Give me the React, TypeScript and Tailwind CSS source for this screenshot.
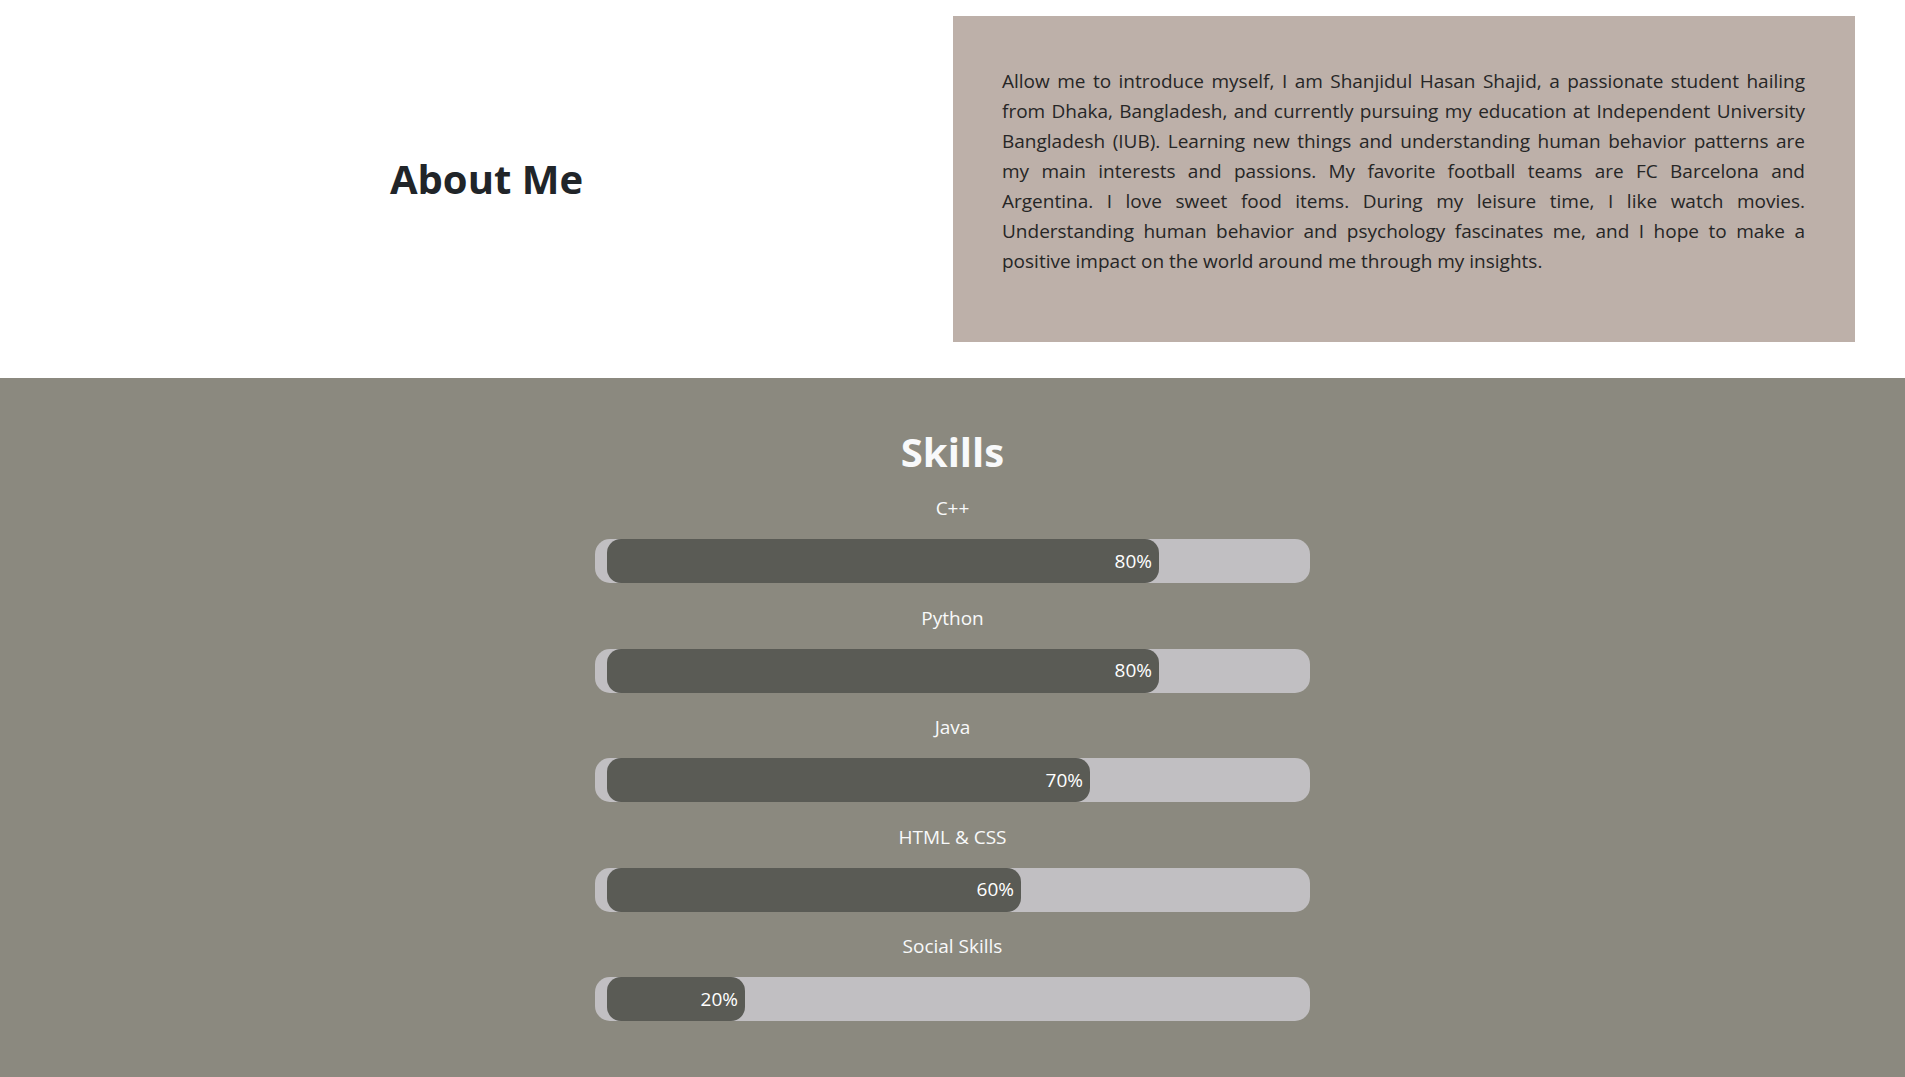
import React from "react";

const skills = [
  { name: "C++", pct: 80 },
  { name: "Python", pct: 80 },
  { name: "Java", pct: 70 },
  { name: "HTML & CSS", pct: 60 },
  { name: "Social Skills", pct: 20 },
];

export default function App() {
  return (
    <div className="bg-white min-h-screen flex flex-col" style={{ fontFamily: '"Open Sans", "Noto Sans", sans-serif' }}>
      <section className="flex items-center pt-4 pb-9">
        <div className="flex-1 flex justify-center pl-[20px]">
          <h2 className="text-[40px] leading-[48px] font-bold text-[#212529]">About Me</h2>
        </div>
        <div className="w-[902px] mr-[50px] bg-[#bdb0a9] pl-[49px] pr-[50px] pt-[50px] pb-[66px]">
          <p className="text-[19px] leading-[30px] text-[#262626] text-justify">
            Allow me to introduce myself, I am Shanjidul Hasan Shajid, a passionate student hailing from Dhaka,
            Bangladesh, and currently pursuing my education at Independent University Bangladesh (IUB). Learning new
            things and understanding human behavior patterns are my main interests and passions. My favorite football
            teams are FC Barcelona and Argentina. I love sweet food items. During my leisure time, I like watch movies.
            Understanding human behavior and psychology fascinates me, and I hope to make a positive impact on the world
            around me through my insights.
          </p>
        </div>
      </section>
      <section className="flex-1 bg-[#8b897f] pt-[50px] pb-[60px] flex flex-col items-center">
        <h2 className="text-[40px] leading-[48px] font-bold text-[#f8f9fa] mb-[17px]">Skills</h2>
        <div className="flex flex-col gap-[19.5px]">
          {skills.map((s) => (
            <div key={s.name} className="flex flex-col items-center">
              <div className="text-[19px] leading-[30px] text-[#f8f9fa] mb-4">{s.name}</div>
              <div className="w-[715px] h-[44px] rounded-[15px] bg-[#c1bfc2] pl-[12px]">
                <div
                  className="h-full rounded-[14px] bg-[#5a5b55] flex items-center justify-end pr-[7px] text-[19px] text-white"
                  style={{ width: `${s.pct * 6.9}px` }}
                >
                  {s.pct}%
                </div>
              </div>
            </div>
          ))}
        </div>
      </section>
    </div>
  );
}
